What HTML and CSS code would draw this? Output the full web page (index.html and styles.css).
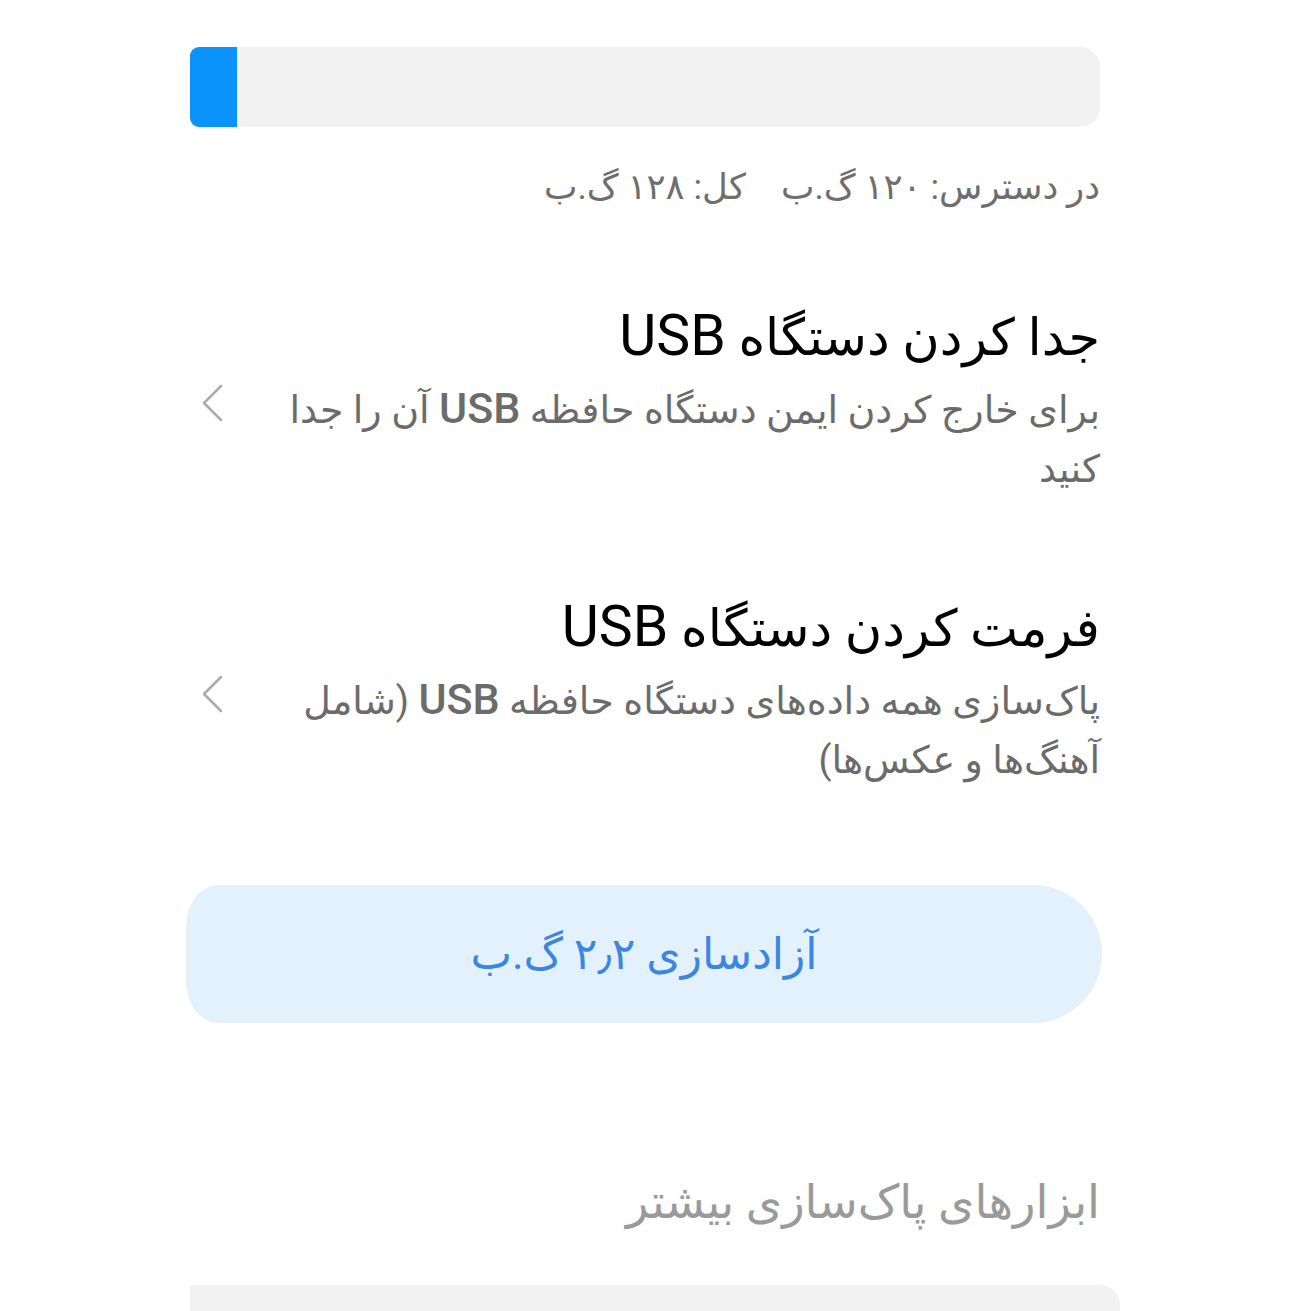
FILE: index.html
```html
<!DOCTYPE html>
<html lang="fa" dir="rtl">
<head>
<meta charset="utf-8">
<title>USB</title>
<link rel="stylesheet" href="styles.css">
</head>
<body>
<div class="page">
  <div class="progress"><div class="progress-fill" style="width:47px"></div></div>
  <div class="status">در دسترس: ۱۲۰ گ.ب&nbsp;&nbsp;&nbsp;&nbsp;کل: ۱۲۸ گ.ب</div>

  <div class="row row-first">
    <div class="row-text">
      <div class="row-title">جدا کردن دستگاه <span class="latin">USB</span></div>
      <div class="row-sub">برای خارج کردن ایمن دستگاه حافظه <span class="latin">USB</span> آن را جدا<br>کنید</div>
    </div>
    <svg class="chev" width="40" height="40" viewBox="0 0 40 40"><polyline points="31,3 14,20 31,37" fill="none" stroke="#ababab" stroke-width="2.5" stroke-linecap="round" stroke-linejoin="round"/></svg>
  </div>

  <div class="row row-second">
    <div class="row-text">
      <div class="row-title">فرمت کردن دستگاه <span class="latin">USB</span></div>
      <div class="row-sub">پاک‌سازی همه داده‌های دستگاه حافظه <span class="latin">USB</span> (شامل<br>آهنگ‌ها و عکس‌ها)</div>
    </div>
    <svg class="chev" width="40" height="40" viewBox="0 0 40 40"><polyline points="31,3 14,20 31,37" fill="none" stroke="#ababab" stroke-width="2.5" stroke-linecap="round" stroke-linejoin="round"/></svg>
  </div>

  <div class="free-btn">آزادسازی ۲٫۲ گ.ب</div>

  <div class="section-head">ابزارهای پاک‌سازی بیشتر</div>

  <div class="panel"></div>
</div>
</body>
</html>
```

FILE: styles.css
```css
html, body {
  margin: 0;
  padding: 0;
  background: #ffffff;
}
body {
  font-family: Roboto, "DejaVu Sans", sans-serif;
  height: 1311px;
  overflow: hidden;
}
.page {
  direction: rtl;
  margin: 0 211px 0 190px;
  padding-top: 47px;
}
.progress {
  direction: ltr;
  height: 80px;
  background: #f2f2f2;
  border-radius: 9px 20px 20px 9px;
  overflow: hidden;
  display: flex;
}
.progress-fill {
  height: 100%;
  background: #0a93fb;
}
.status {
  margin-top: 40px;
  line-height: 40px;
  font-size: 35.5px;
  color: #6e6e6e;
}
.row {
  display: flex;
  flex-direction: row;
  align-items: center;
}
.row-first {
  margin-top: 99px;
}
.row-second {
  margin-top: 98px;
}
.row-text {
  flex: 1;
}
.row-title {
  font-size: 51px;
  line-height: 64px;
  color: #000000;
}
.row-title .latin {
  font-weight: 400;
  font-size: 1.12em;
}
.row-sub {
  margin-top: 11px;
  font-size: 38px;
  line-height: 59px;
  color: #6b6b6b;
}
.latin {
  font-family: Roboto, sans-serif;
  font-weight: 500;
  font-size: 1.13em;
  line-height: 1;
}
.chev {
  flex: none;
}
.free-btn {
  margin: 95px -2px 0 -4px;
  height: 138px;
  display: flex;
  align-items: center;
  justify-content: center;
  background: #e3f1fd;
  border-radius: 69px;
  border-top-left-radius: 32px 42px;
  border-bottom-left-radius: 32px 42px;
  font-size: 44px;
  color: #3a86e0;
}
.section-head {
  margin-top: 149px;
  line-height: 60px;
  font-size: 46.5px;
  color: #9a9a9a;
}
.panel {
  margin-top: 53px;
  margin-right: -20px;
  height: 60px;
  background: #f2f2f2;
  border-top-right-radius: 20px;
}
```
